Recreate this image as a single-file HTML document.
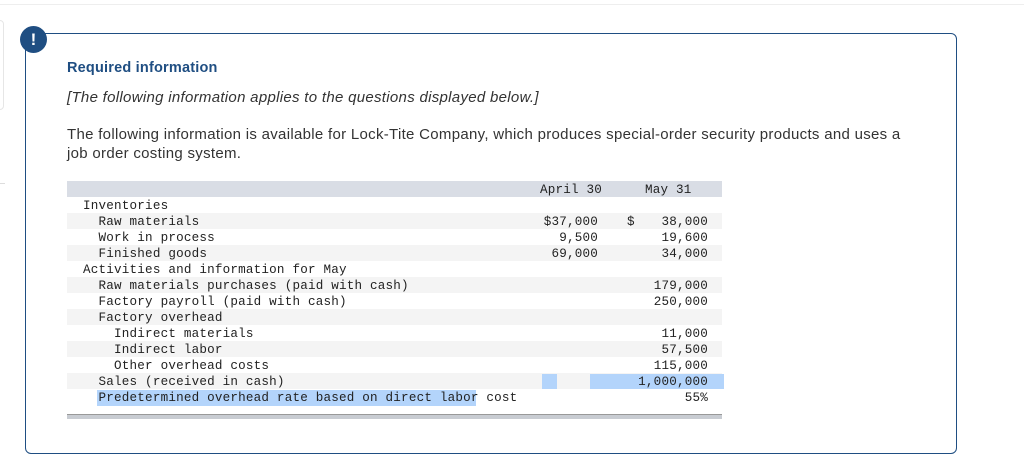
<!DOCTYPE html>
<html><head><style>
body{margin:0;width:1024px;height:464px;background:#fff;position:relative;overflow:hidden;font-family:"Liberation Sans",Arial,sans-serif}
.a{position:absolute}
.m{font-family:"Liberation Mono",monospace;font-size:12.6px;letter-spacing:0.2px;color:#222;white-space:pre;line-height:16px}
.row{position:absolute;left:67px;width:655px;height:16px}
.g{background:#f4f4f4}
.s{font-size:15px;letter-spacing:0.3px}
</style></head><body>
<div class="a" style="left:0;top:4px;width:1024px;height:1px;background:#eee"></div>
<div class="a" style="left:-10px;top:20px;width:12px;height:88px;border:1px solid #e6e6e6;border-radius:4px"></div>
<div class="a" style="left:0;top:183px;width:5px;height:1px;background:#ddd"></div>
<div class="a" style="left:25px;top:33px;width:930px;height:419px;border:1px solid #1f4e82;border-radius:6px"></div>
<div class="a" style="left:20px;top:26px;width:27px;height:27px;border-radius:50%;background:#1f4e82;color:#fff;font-weight:bold;font-size:17px;text-align:center;line-height:27px">!</div>
<div class="a" style="left:67px;top:60px;font-size:14.5px;letter-spacing:0.2px;font-weight:bold;color:#1f4e82">Required information</div>
<div class="a s" style="left:67px;top:89px;font-style:italic;color:#333">[The following information applies to the questions displayed below.]</div>
<div class="a s" style="left:67px;top:125px;width:845px;color:#333;line-height:19px">The following information is available for Lock-Tite Company, which produces special-order security products and uses a job order costing system.</div>
<div class="row" style="top:181px;background:#d9dde5"></div>
<div class="row g" style="top:213px"></div>
<div class="row g" style="top:245px"></div>
<div class="row g" style="top:277px"></div>
<div class="row g" style="top:309px"></div>
<div class="row g" style="top:341px"></div>
<div class="row g" style="top:373px"></div>
<div class="a" style="left:542px;top:374px;width:15px;height:15px;background:#b3d4fb"></div>
<div class="a" style="left:590px;top:374px;width:134px;height:15px;background:#b3d4fb"></div>
<div class="a" style="left:97px;top:390px;width:379px;height:16px;background:#b3d4fb"></div>
<div class="a" style="left:67px;top:414px;width:655px;height:4px;background:#c8ccd2;border-top:1px solid #999"></div>
<div class="a m" style="left:540px;top:182px">April 30</div>
<div class="a m" style="left:645px;top:182px">May 31</div>
<div class="a m" style="left:83px;top:198px">Inventories
  Raw materials
  Work in process
  Finished goods
Activities and information for May
  Raw materials purchases (paid with cash)
  Factory payroll (paid with cash)
  Factory overhead
    Indirect materials
    Indirect labor
    Other overhead costs
  Sales (received in cash)
  Predetermined overhead rate based on direct labor cost</div>
<div class="a m" style="left:530px;top:214px;text-align:right;width:68px">$37,000
9,500
69,000</div>
<div class="a m" style="left:627px;top:214px">$</div>
<div class="a m" style="left:610px;top:214px;text-align:right;width:98px">38,000
19,600
34,000

179,000
250,000

11,000
57,500
115,000
1,000,000
55%</div>
</body></html>
